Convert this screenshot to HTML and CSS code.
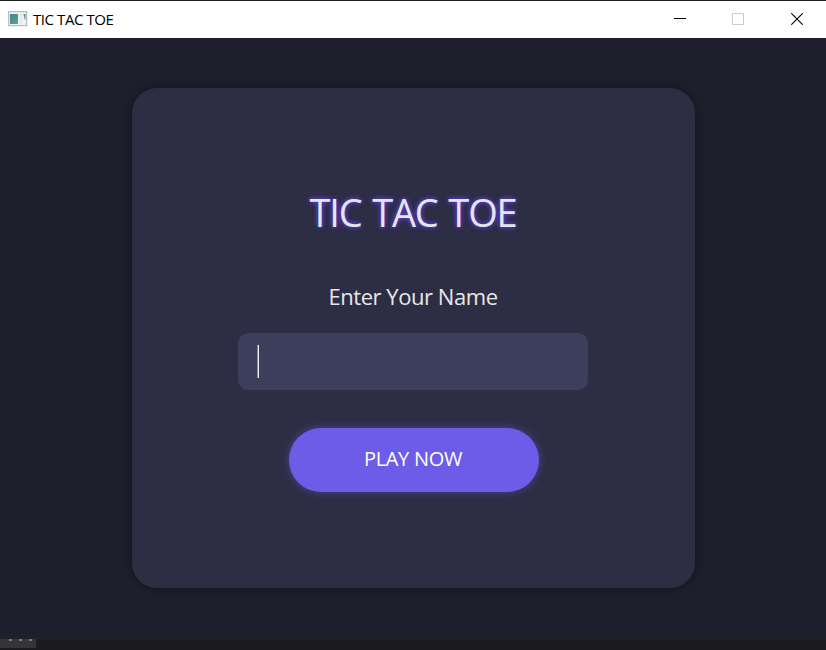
FILE: index.html
```html
<!DOCTYPE html>
<html lang="en">
<head>
<meta charset="utf-8">
<title>TIC TAC TOE</title>
<link rel="stylesheet" href="styles.css">
</head>
<body>
<div class="window">
  <header class="titlebar">
    <svg class="app-icon" width="20" height="16" viewBox="0 0 20 16">
      <defs><linearGradient id="pane" x1="0" y1="0" x2="1" y2="1"><stop offset="0" stop-color="#4c7f9d"/><stop offset="1" stop-color="#55a878"/></linearGradient></defs>
      <rect x=".7" y=".7" width="18" height="14" fill="#f1f2f3" stroke="#a9b0b5"/>
      <rect x="2" y="3" width="8" height="10" fill="url(#pane)"/>
      <rect x="11" y="3" width="4" height="10" fill="#e8eaeb"/>
      <path d="M15.500 3h2v6l-1-1z" fill="#5793a4"/>
    </svg>
    <span class="caption">TIC TAC TOE</span>
    <div class="controls">
      <svg width="12" height="12" viewBox="0 0 12 12"><path d="M0 5.500h12" stroke="#000"/></svg>
      <svg width="12" height="12" viewBox="0 0 12 12"><path d="M.5.5h11v11H.5z" fill="none" stroke="#ccc"/></svg>
      <svg width="12" height="12" viewBox="0 0 12 12"><path d="M.3.3l11.400 11.400M11.700.3L.3 11.700" stroke="#000" stroke-width="1.100"/></svg>
    </div>
  </header>
  <main class="stage">
    <section class="card">
      <h1 class="title">TIC TAC TOE</h1>
      <label class="prompt">Enter Your Name</label>
      <div class="field"><span class="caret"></span></div>
      <button class="play">PLAY NOW</button>
    </section>
  </main>
  <footer class="strip"><div class="dots"><i></i><i></i><i></i></div></footer>
</div>
</body>
</html>
```
FILE: styles.css
```css
* { box-sizing: border-box; }
body { margin: 0; font-family: "Open Sans", "Noto Sans", sans-serif; }
.window { width: 826px; height: 650px; display: flex; flex-direction: column; overflow: hidden; background: #1f1e2c; }
.titlebar { height: 38px; flex: none; display: flex; align-items: center; background: #fff; border-top: 1px solid #202020; padding: 0 23px 0 8px; }
.app-icon { margin: 0 5px 2px 0; }
.caption { font-size: 15px; line-height: 20px; letter-spacing: -0.42px; margin-bottom: 2px; color: #000; white-space: nowrap; }
.controls { margin-left: auto; display: flex; gap: 47px; padding-bottom: 1px; }
.controls svg { display: block; }
.controls svg:first-child { margin-right: -1px; }
.stage { height: 600px; flex: none; display: flex; justify-content: center; padding-top: 50px; }
.card { width: 563px; height: 500px; border-radius: 25px; background: #2d2d44; box-shadow: 0 0 10px rgba(0,0,0,.4); display: flex; flex-direction: column; align-items: center; padding-top: 96px; }
.title { margin: 0; height: 56px; line-height: 56px; font-size: 38px; font-weight: 400; color: #e6e6ea; letter-spacing: -1.15px; word-spacing: 2px; white-space: nowrap; text-shadow: 0 0 5px #5b3ed0, 0 0 5px #5b3ed0; }
.prompt { margin-top: 40px; height: 32px; line-height: 32px; font-size: 22px; letter-spacing: -0.45px; color: #e8e8e8; white-space: nowrap; }
.field { margin: 21px 1px 0 0; width: 350px; height: 57px; border-radius: 10px; background: #3d3d5c; display: flex; align-items: center; padding-left: 19px; }
.caret { width: 2px; height: 33px; background: linear-gradient(90deg, #8b8a9c 50%, #f2f2f5 50%); }
.play { margin: 38px 0 0 1px; width: 250px; height: 64px; border: 0; border-radius: 32px; background: #6c5ce7; box-shadow: 0 0 10px rgba(108,92,231,.5); font: 400 20px/62px "Open Sans", "Noto Sans", sans-serif; letter-spacing: -0.3px; color: #fff; padding: 0 1px 2px 0; }
.strip { height: 12px; flex: none; background: #1c1c1e; border-top: 1px solid #232324; }
.dots { width: 36px; height: 9px; background: #343538; display: flex; gap: 7px; padding: 0 0 0 9px; }
.dots i { width: 3px; height: 2px; background: #747b83; }
```
